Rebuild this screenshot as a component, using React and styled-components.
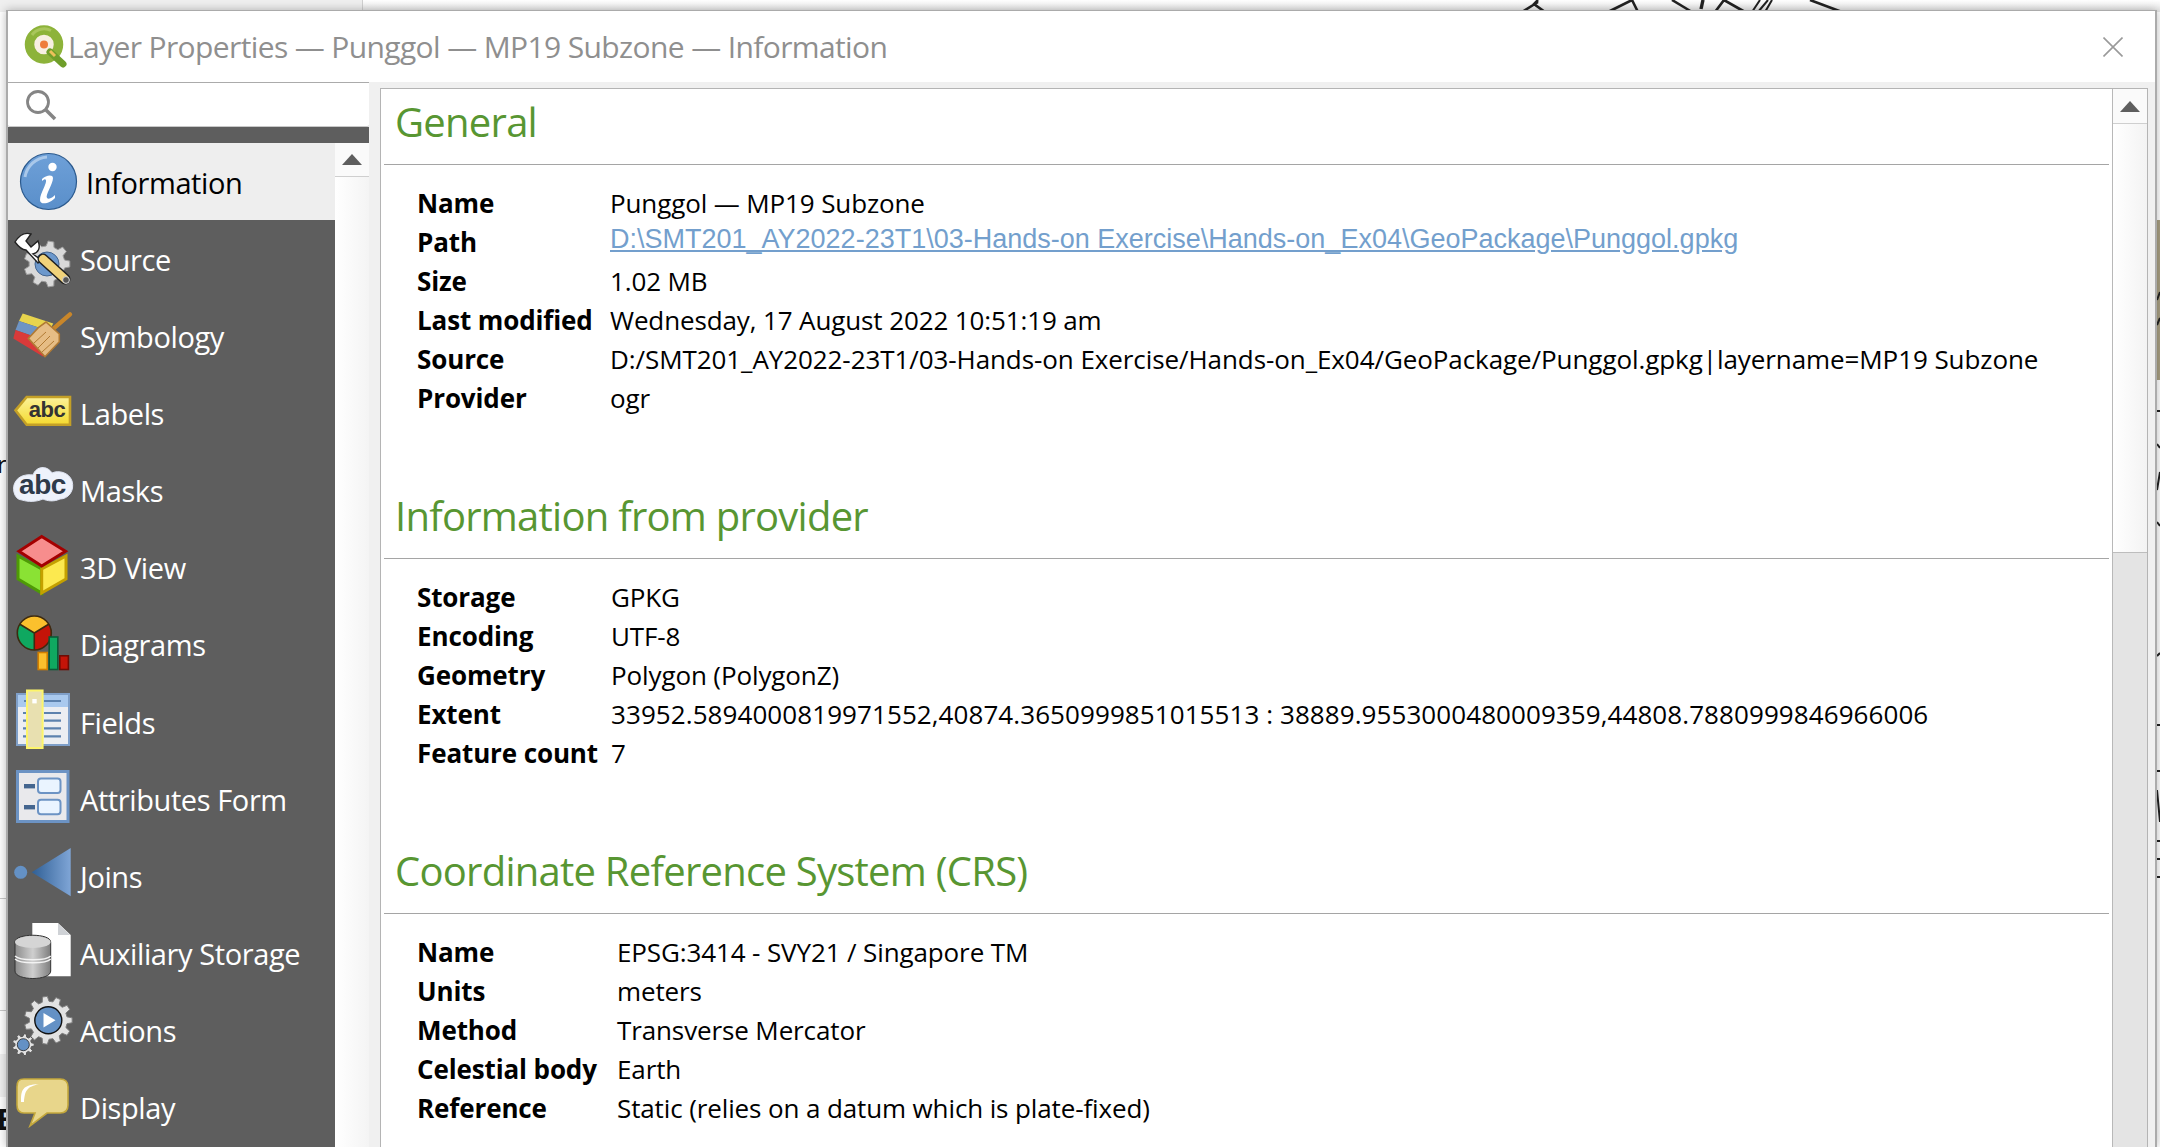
import React from 'react';
import styled, { createGlobalStyle } from 'styled-components';

const Global = createGlobalStyle`
  html, body { margin: 0; padding: 0; height: 1147px; overflow: hidden; background: #fff; }
  #root { height: 1147px; }
  * { box-sizing: border-box; }
`;

const Page = styled.div`
  position: relative;
  height: 1147px;
  padding: 10px 3px 0 6px;
  overflow: hidden;
`;
const Backdrop = styled.svg`
  position: absolute;
  inset: 0;
  width: 2160px;
  height: 1147px;
`;
const Win = styled.div`
  position: relative;
  height: 1137px;
  background: #f0f0f0;
  border: 2px solid #ababab;
  border-top-width: 1px;
  border-bottom: 0;
  box-shadow: 0 0 9px rgba(0, 0, 0, 0.28);
  display: flex;
  flex-direction: column;
`;
const TitleBar = styled.div`
  height: 71px;
  flex: none;
  background: #fff;
  display: flex;
  align-items: center;
  padding: 0 32px 0 15px;
`;
const TitleText = styled.div`
  flex: 1;
  margin-left: -1px;
  font: 400 30px/1 "Open Sans", sans-serif;
  letter-spacing: -0.62px;
  color: #8f8f8f;
`;
const Body = styled.div`
  flex: 1;
  min-height: 0;
  display: flex;
  padding-right: 7px;
`;
const Sidebar = styled.div`
  width: 361px;
  flex: none;
  display: flex;
  flex-direction: column;
`;
const SearchBox = styled.div`
  height: 45px;
  flex: none;
  background: #fff;
  border-top: 1px solid #ababab;
  border-bottom: 1px solid #c8c8c8;
  border-radius: 0 0 2px 2px;
  padding-left: 17px;
  display: flex;
  align-items: center;
`;
const DarkStrip = styled.div`
  height: 16px;
  flex: none;
  background: #5e5e5e;
`;
const ListArea = styled.div`
  flex: 1;
  min-height: 0;
  display: flex;
`;
const List = styled.div`
  width: 327px;
  flex: none;
  background: #5e5e5e;
`;
const Item = styled.div`
  height: 77.15px;
  display: flex;
  align-items: center;
  padding-left: ${p => (p.$active ? 12 : 6)}px;
  gap: 8px;
  background: ${p => (p.$active ? '#eeeeee' : 'transparent')};
  color: ${p => (p.$active ? '#000' : '#fff')};
  font: 400 29px/1 "Open Sans", sans-serif;
  letter-spacing: -0.4px;
`;
const ItemLabel = styled.span`
  margin-top: 1px;
`;
const IconBox = styled.svg`
  width: 58px;
  height: 58px;
  flex: none;
  overflow: visible;
`;
const ListScroll = styled.div`
  width: 34px;
  flex: none;
  background: linear-gradient(90deg, #ffffff, #f4f4f4);
`;
const ScrollBtn = styled.div`
  height: ${p => p.$h}px;
  background: #fafafa;
  border-bottom: 1px solid #cfcfcf;
  display: flex;
  align-items: center;
  justify-content: center;
`;
const Arrow = styled.div`
  width: 0;
  height: 0;
  border-left: 10px solid transparent;
  border-right: 10px solid transparent;
  border-bottom: 11px solid #5e5e5e;
`;
const Content = styled.div`
  flex: 1;
  margin: 6px 0 0 11px;
  min-width: 0;
  display: flex;
  background: #fff;
  border: 1px solid #b4b4b4;
  border-bottom: 0;
`;
const Doc = styled.div`
  flex: 1;
  min-width: 0;
  padding-left: 3px;
  overflow: hidden;
`;
const Section = styled.section`
  padding-right: 3px;
  margin-bottom: 65.5px;
`;
const Heading = styled.h2`
  margin: 0 0 18.5px;
  height: 76px;
  padding: 0 0 10px 11px;
  border-bottom: 1px solid #a5a5a5;
  font: 400 40px/66px "Open Sans", sans-serif;
  letter-spacing: -0.75px;
  color: #589632;
`;
const Rows = styled.div`
  display: grid;
  grid-template-columns: ${p => p.$col}px 1fr;
  grid-auto-rows: 39px;
  padding-left: 33px;
  align-items: center;
`;
const Label = styled.div`
  font: 700 26px/39px "Open Sans", sans-serif;
  letter-spacing: -0.12px;
  color: #000;
  white-space: nowrap;
`;
const Value = styled.div`
  font: 400 26px/39px "Open Sans", sans-serif;
  letter-spacing: ${p => p.$ls ?? -0.12}px;
  color: #000;
  white-space: nowrap;
`;
const PathLink = styled.a`
  font: 400 27px/33px "Liberation Sans", Arial, sans-serif;
  letter-spacing: 0;
  color: #739fcd;
  text-decoration: underline;
  white-space: nowrap;
  display: block;
  margin-top: -6px;
`;
const MainScroll = styled.div`
  width: 35px;
  flex: none;
  display: flex;
  flex-direction: column;
  border-left: 1px solid #b8b8b8;
  background: #e4e4e4;
`;
const Thumb = styled.div`
  height: 429px;
  flex: none;
  background: linear-gradient(90deg, #ffffff, #f3f3f3);
  border-bottom: 1px solid #bdbdbd;
`;

const gearPath = (cx, cy, R, r, n) => {
  let d = '';
  const step = (Math.PI * 2) / n;
  for (let i = 0; i < n; i++) {
    const a = i * step;
    const pts = [
      [r, a - step * 0.32],
      [R, a - step * 0.18],
      [R, a + step * 0.18],
      [r, a + step * 0.32],
    ];
    pts.forEach(([rad, an], j) => {
      d += `${i === 0 && j === 0 ? 'M' : 'L'}${(cx + rad * Math.cos(an)).toFixed(2)} ${(cy + rad * Math.sin(an)).toFixed(2)} `;
    });
  }
  return d + 'Z';
};

const QgisLogo = () => (
  <svg width="46" height="46" viewBox="0 0 46 46" style={{ flex: 'none' }}>
    <circle cx="21" cy="20.5" r="14.5" fill="#f7efe2" stroke="#8db33a" strokeWidth="9.5" />
    <path d="M9 11 A15 15 0 0 1 28 6.5" fill="none" stroke="#a9c65c" strokeWidth="3" />
    <path d="M27 28 L40 40" stroke="#6f9e2a" strokeWidth="7" strokeLinecap="round" />
    <path d="M27 27 L32 32" stroke="#ecc05a" strokeWidth="3" />
    <circle cx="21" cy="20.5" r="4" fill="#ee7d3b" />
  </svg>
);

const CloseX = () => (
  <svg width="20" height="20" viewBox="0 0 20 20" style={{ flex: 'none' }}>
    <path d="M0.5 0.5 L19.5 19.5 M19.5 0.5 L0.5 19.5" stroke="#9a9a9a" strokeWidth="1.6" />
  </svg>
);

const SearchIcon = () => (
  <svg width="32" height="32" viewBox="0 0 32 32">
    <circle cx="13" cy="13" r="10.5" fill="none" stroke="#858585" strokeWidth="2.8" />
    <path d="M21 21 L30 30" stroke="#858585" strokeWidth="3.6" />
  </svg>
);

const InfoIcon = () => (
  <IconBox viewBox="0 0 58 58">
    <defs>
      <linearGradient id="infoG" x1="0" y1="0" x2="0" y2="1">
        <stop offset="0" stopColor="#6ea0d8" />
        <stop offset="1" stopColor="#5a8fca" />
      </linearGradient>
    </defs>
    <circle cx="28.5" cy="28.5" r="28" fill="url(#infoG)" stroke="#2b5a8e" strokeWidth="1.2" />
    <path d="M5 24 A24 24 0 0 1 27 4" fill="none" stroke="#a9c8ea" strokeWidth="3" />
    <circle cx="32.5" cy="14" r="4.2" fill="#fff" />
    <path d="M22 26 C26 22 33 21 33 25 C33 31 25 42 27 45 C29 47 33 44 35 42 L35 45 C31 50 20 53 20 47 C20 40 27 31 26 27 C25 25 23 27 22 28 Z" fill="#fff" />
  </IconBox>
);

const SourceIcon = () => (
  <IconBox viewBox="0 0 58 58">
    <path d={gearPath(33, 34, 23, 18, 9)} fill="#d9d9d9" stroke="#9a9a9a" strokeWidth="1" />
    <circle cx="33" cy="34" r="12" fill="#6c98cc" stroke="#44658f" />
    <path d="M1 12 C6 4 11 2 17 4 L12 11 L17 17 L24 11 C27 18 24 23 19 24 L27 30 L24 33 L12 20 C8 20 4 16 1 12 Z" fill="#fff" stroke="#222" strokeWidth="1.4" />
    <path d="M29 29 L51 49" stroke="#1f1f1f" strokeWidth="11" strokeLinecap="round" />
    <path d="M29 29 L51 49" stroke="#f0d27a" strokeWidth="8" strokeLinecap="round" />
    <circle cx="52" cy="50" r="3.4" fill="#555" stroke="#ddd" />
  </IconBox>
);

const SymbologyIcon = () => (
  <IconBox viewBox="0 0 58 58">
    <path d="M8.7 6.4 L39.3 16.4 L35 24 L5 14 Z" fill="#e8d44d" />
    <path d="M5 14 L35 24 L30 33 L1.5 23 Z" fill="#6e94c4" />
    <path d="M1.5 23 L30 33 L29.3 49.7 L-0.7 31.4 Z" fill="#d93a3a" />
    <path d="M56 7.4 L36 24.7" stroke="#c8862a" strokeWidth="4.4" strokeLinecap="round" />
    <path d="M24.3 20.7 L32 15 L45.3 27 L45.3 34.7 L31 49.7 L14.3 31.4 Z" fill="#e6bd85" stroke="#b17a33" strokeWidth="1.6" />
    <path d="M20 36 L32 25 M24 41 L36 29 M28 45 L40 34" stroke="#b17a33" strokeWidth="1" />
  </IconBox>
);

const LabelsIcon = () => (
  <IconBox viewBox="0 0 58 58">
    <defs>
      <linearGradient id="lblG" x1="0" y1="0" x2="0" y2="1">
        <stop offset="0" stopColor="#fbf29a" />
        <stop offset="1" stopColor="#f5da2f" />
      </linearGradient>
    </defs>
    <path d="M1.5 26.3 L12.7 13 H56 V40.7 H12.7 Z" fill="url(#lblG)" stroke="#c4a027" strokeWidth="2.6" />
    <text x="33" y="33" textAnchor="middle" fontFamily="Liberation Sans, sans-serif" fontWeight="700" fontSize="22" fill="#333">abc</text>
  </IconBox>
);

const MasksIcon = () => (
  <IconBox viewBox="0 0 58 58">
    <path d="M8 39 C0 39 -3 26 2 20 C5 15 12 13 19 14 C22 5 33 4 38 12 C44 9 55 11 58 20 C61 30 54 38 46 38 C40 41 33 40 29 38 C22 41 14 41 8 39 Z" fill="#eef2fb" stroke="#dfe4f2" />
    <text x="28.5" y="33" textAnchor="middle" fontFamily="Liberation Sans, sans-serif" fontWeight="700" fontSize="28" fill="#2e3a4a">abc</text>
  </IconBox>
);

const ThreeDIcon = () => (
  <IconBox viewBox="0 0 58 58">
    <path d="M4 18 L27.7 31 V55 L4 41 Z" fill="#8ae234" stroke="#4e9a06" strokeWidth="3" />
    <path d="M52 18 L27.7 31 V55 L52 41 Z" fill="#fce94f" stroke="#c4a000" strokeWidth="3" />
    <path d="M27.7 -1.5 L51.5 13.3 L27.7 28 L5 13.3 Z" fill="#f78d8d" stroke="#a40000" strokeWidth="3" />
  </IconBox>
);

const DiagramsIcon = () => (
  <IconBox viewBox="0 0 58 58">
    <path d="M20.3 18 L5.5 9 A17.3 17.3 0 0 1 35 9 Z" fill="#fbc02d" />
    <path d="M20.3 18 L5.5 9 A17.3 17.3 0 0 0 20.3 35.3 Z" fill="#0fa860" />
    <path d="M20.3 18 L35 9 A17.3 17.3 0 0 1 20.3 35.3 Z" fill="#c41408" />
    <circle cx="20.3" cy="18" r="17" fill="none" stroke="#3d2a10" strokeWidth="1.6" />
    <path d="M20.3 18 L5.5 9 M20.3 18 L35 9 M20.3 18 V35" stroke="#3d2a10" strokeWidth="1.6" />
    <rect x="24.2" y="37.5" width="9" height="17" fill="#fbc02d" stroke="#d17e00" strokeWidth="1.6" />
    <rect x="35.2" y="22" width="8.6" height="32.5" fill="#0fa860" stroke="#0b5a38" strokeWidth="1.6" />
    <rect x="45.8" y="40.8" width="8.6" height="13.7" fill="#c41408" stroke="#6e0c05" strokeWidth="1.6" />
  </IconBox>
);

const FieldsIcon = () => (
  <IconBox viewBox="0 0 58 58">
    <rect x="3" y="1" width="52" height="51" fill="#eceef2" stroke="#7f9fc8" strokeWidth="2" />
    <rect x="4" y="2" width="50" height="12" fill="#a9c9ee" />
    <path d="M30 8 H47 M10 8 H12 M30 20 H47 M30 27.7 H47 M30 35.3 H47 M30 43.3 H47 M9 20 H12 M9 27.7 H12 M9 35.3 H12 M9 43.3 H12" stroke="#5d82ae" strokeWidth="2.2" />
    <rect x="13" y="-2.5" width="15.6" height="57.5" fill="#e8e0b0" stroke="#fdf56a" strokeWidth="2" />
    <rect x="18.3" y="6" width="4.4" height="4.4" fill="#fff" />
  </IconBox>
);

const AttrFormIcon = () => (
  <IconBox viewBox="0 0 58 58">
    <rect x="3.5" y="1.5" width="50.5" height="50" fill="#e9e9ec" stroke="#6c93c4" strokeWidth="3" />
    <rect x="10" y="14" width="11" height="4.4" fill="#44658f" />
    <rect x="10" y="35" width="11" height="4.4" fill="#44658f" />
    <rect x="24" y="8.5" width="22.5" height="14.5" rx="3" fill="#eaf4ff" stroke="#6c93c4" strokeWidth="2" />
    <rect x="24" y="29.7" width="22.5" height="14.5" rx="3" fill="#eaf4ff" stroke="#6c93c4" strokeWidth="2" />
  </IconBox>
);

const JoinsIcon = () => (
  <IconBox viewBox="0 0 58 58">
    <defs>
      <linearGradient id="joinG" x1="0" y1="0" x2="1" y2="0">
        <stop offset="0" stopColor="#2f5f95" />
        <stop offset="1" stopColor="#7fa5d6" />
      </linearGradient>
    </defs>
    <circle cx="6.7" cy="25.3" r="6.5" fill="#6491c5" />
    <path d="M17.7 25.3 L56.7 1 V49.3 Z" fill="url(#joinG)" />
  </IconBox>
);

const AuxIcon = () => (
  <IconBox viewBox="0 0 58 58">
    <defs>
      <linearGradient id="dbG" x1="0" y1="0" x2="1" y2="0">
        <stop offset="0" stopColor="#8c8c8c" />
        <stop offset="0.5" stopColor="#cfcfcf" />
        <stop offset="1" stopColor="#7d7d7d" />
      </linearGradient>
    </defs>
    <path d="M18.3 -1 H44 L56.7 11 V52.3 H18.3 Z" fill="#fff" />
    <path d="M44 -0.5 V11 H56 Z" fill="#cfd2d6" />
    <path d="M1 18 C1 9 36.7 9 36.7 18 V47 C36.7 57 1 57 1 47 Z" fill="url(#dbG)" stroke="#333" strokeWidth="1" />
    <ellipse cx="18.8" cy="18" rx="17.8" ry="6" fill="#d5d5d5" />
    <path d="M1 32 C6 37 32 37 36.7 32 M1 35 C6 40 32 40 36.7 35" fill="none" stroke="#f3f3f3" strokeWidth="1.4" />
  </IconBox>
);

const ActionsIcon = () => (
  <IconBox viewBox="0 0 58 58">
    <path d={gearPath(34.3, 19.3, 24, 19, 11)} fill="#e2e2e2" stroke="#7d7d7d" strokeWidth="1" />
    <circle cx="34.3" cy="19.3" r="13.5" fill="#6491c5" stroke="#111" strokeWidth="1.4" />
    <path d="M29.5 12 L41.5 19.3 L29.5 26.5 Z" fill="#fff" />
    <path d={gearPath(9.3, 43.7, 11, 8.4, 9)} fill="#e2e2e2" stroke="#555" strokeWidth="1" />
    <circle cx="9.3" cy="43.7" r="6" fill="#6491c5" stroke="#222" strokeWidth="0.8" />
  </IconBox>
);

const DisplayIcon = () => (
  <IconBox viewBox="0 0 58 58">
    <path d="M10 1 H46 C51 1 54 3 54 9 V27 C54 32 51 35 46 35 H33 L16 48 L21 35 H10 C5 35 3 32 3 27 V9 C3 3 5 1 10 1 Z" fill="#e8d68b" stroke="#c4a83c" strokeWidth="1.6" />
    <path d="M7 24 C7 12 8 7 25 6 C13 9 11 12 10 24 Z" fill="#fff" />
  </IconBox>
);

const nav = [
  ['Information', InfoIcon],
  ['Source', SourceIcon],
  ['Symbology', SymbologyIcon],
  ['Labels', LabelsIcon],
  ['Masks', MasksIcon],
  ['3D View', ThreeDIcon],
  ['Diagrams', DiagramsIcon],
  ['Fields', FieldsIcon],
  ['Attributes Form', AttrFormIcon],
  ['Joins', JoinsIcon],
  ['Auxiliary Storage', AuxIcon],
  ['Actions', ActionsIcon],
  ['Display', DisplayIcon],
];

const sections = [
  {
    title: 'General',
    col: 193,
    rows: [
      ['Name', 'Punggol — MP19 Subzone'],
      ['Path', <PathLink key="p">D:\SMT201_AY2022-23T1\03-Hands-on Exercise\Hands-on_Ex04\GeoPackage\Punggol.gpkg</PathLink>],
      ['Size', '1.02 MB'],
      ['Last modified', 'Wednesday, 17 August 2022 10:51:19 am'],
      ['Source', 'D:/SMT201_AY2022-23T1/03-Hands-on Exercise/Hands-on_Ex04/GeoPackage/Punggol.gpkg|layername=MP19 Subzone', -0.08],
      ['Provider', 'ogr'],
    ],
  },
  {
    title: 'Information from provider',
    col: 194,
    rows: [
      ['Storage', 'GPKG'],
      ['Encoding', 'UTF-8'],
      ['Geometry', 'Polygon (PolygonZ)'],
      ['Extent', '33952.5894000819971552,40874.3650999851015513 : 38889.9553000480009359,44808.7880999846966006', 0.08],
      ['Feature count', '7'],
    ],
  },
  {
    title: 'Coordinate Reference System (CRS)',
    col: 200,
    rows: [
      ['Name', 'EPSG:3414 - SVY21 / Singapore TM'],
      ['Units', 'meters'],
      ['Method', 'Transverse Mercator'],
      ['Celestial body', 'Earth'],
      ['Reference', 'Static (relies on a datum which is plate-fixed)'],
    ],
  },
];

const MapBehind = () => (
  <Backdrop viewBox="0 0 2160 1147">
    <defs>
      <linearGradient id="topShade" x1="0" y1="0" x2="0" y2="1">
        <stop offset="0" stopColor="#ffffff" />
        <stop offset="1" stopColor="#e6e6e6" />
      </linearGradient>
    </defs>
    <rect x="0" y="0" width="2160" height="12" fill="url(#topShade)" />
    <rect x="0" y="0" width="362" height="12" fill="#efefef" />
    <path d="M362.5 0 V12" stroke="#d0d0d0" />
    <rect x="0" y="1054" width="8" height="43" fill="#f0f0f0" />
    <path d="M0 898.5 H8 M0 1010.5 H8" stroke="#c8c8c8" />
    <g fill="none" stroke="#222" strokeWidth="2.6">
      <path d="M1522 12 L1538 2 M1538 0 L1534 4 L1545 12" />
      <path d="M1608 12 L1632 0 L1638 12" />
      <path d="M1672 0 L1692 12" />
      <path d="M1703 0 L1701 9" strokeWidth="3.4" />
      <path d="M1715 12 L1724 0 L1745 12" />
      <path d="M1752 12 L1760 0 M1758 12 L1768 0 M1765 12 L1772 0" strokeWidth="2" />
      <path d="M1810 0 L1842 12" />
    </g>
    <rect x="2157" y="220" width="3" height="160" fill="#a89f82" />
    <g stroke="#222" strokeWidth="2" fill="none">
      <path d="M2157 300 L2160 292 M2157 325 L2160 318 M2157 411 H2160 M2157 444 L2160 448 M2157 490 L2160 472 M2157 522 L2160 526 M2157 656 L2160 653 M2157 725 H2160 M2157 771 H2160 M2157 790 L2160 822 M2157 841 H2160 M2157 859 H2160 M2157 877 H2160" />
    </g>
    <text x="-3" y="473" fontFamily="Open Sans, sans-serif" fontSize="24" fill="#111">r</text>
    <text x="-3" y="1130" fontFamily="Open Sans, sans-serif" fontWeight="700" fontSize="28" fill="#111">E</text>
  </Backdrop>
);

export default function App() {
  return (
    <>
      <Global />
      <Page>
        <MapBehind />
        <Win>
          <TitleBar>
            <QgisLogo />
            <TitleText>Layer Properties — Punggol — MP19 Subzone — Information</TitleText>
            <CloseX />
          </TitleBar>
          <Body>
            <Sidebar>
              <SearchBox><SearchIcon /></SearchBox>
              <DarkStrip />
              <ListArea>
                <List>
                  {nav.map(([name, Icon], i) => (
                    <Item key={name} $active={i === 0}>
                      <Icon />
                      <ItemLabel>{name}</ItemLabel>
                    </Item>
                  ))}
                </List>
                <ListScroll>
                  <ScrollBtn $h={34}><Arrow /></ScrollBtn>
                </ListScroll>
              </ListArea>
            </Sidebar>
            <Content>
              <Doc>
                {sections.map(s => (
                  <Section key={s.title}>
                    <Heading>{s.title}</Heading>
                    <Rows $col={s.col}>
                      {s.rows.map(([k, v, ls]) => (
                        <React.Fragment key={k}>
                          <Label>{k}</Label>
                          <Value $ls={ls}>{v}</Value>
                        </React.Fragment>
                      ))}
                    </Rows>
                  </Section>
                ))}
              </Doc>
              <MainScroll>
                <ScrollBtn $h={35}><Arrow /></ScrollBtn>
                <Thumb />
              </MainScroll>
            </Content>
          </Body>
        </Win>
      </Page>
    </>
  );
}
